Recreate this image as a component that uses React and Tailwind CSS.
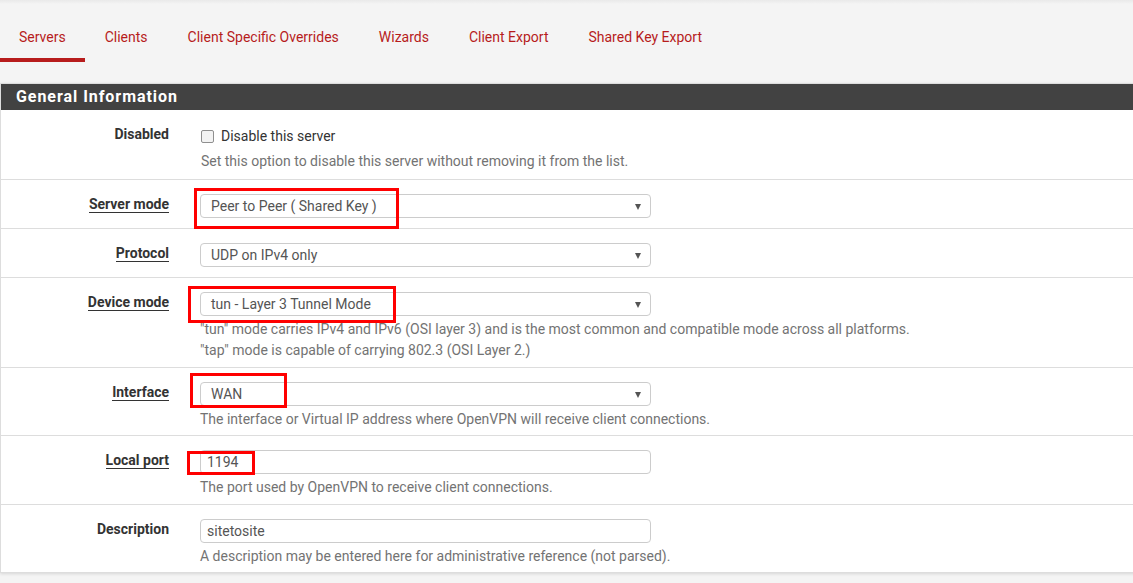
import React from "react";

const font = { fontFamily: "Roboto, 'Liberation Sans', sans-serif" };

function Select({ value }) {
  return (
    <div className="relative flex h-[24px] w-[451px] items-center rounded-[4px] border border-[#cccccc] bg-white pl-[10px] text-[14px] text-[#555555]">
      {value}
      <span className="absolute right-[9px] top-[9px] h-0 w-0 border-x-[3px] border-t-[6px] border-x-transparent border-t-[#555555]"></span>
    </div>
  );
}

function Input({ value }) {
  return (
    <div className="flex h-[24px] w-[451px] items-center rounded-[4px] border border-[#cccccc] bg-white pl-[6px] text-[14px] text-[#555555]">
      {value}
    </div>
  );
}

function Row({ label, underline, pb = "pb-[6px]", children }) {
  return (
    <div className="flex border-t border-[#dddddd]">
      <div className="w-[184px] pr-[16px] pt-[12px] text-right">
        <span
          className={
            "text-[14px] font-bold leading-[24px] text-[#333333] " +
            (underline ? "border-b border-[#333333]" : "")
          }
        >
          {label}
        </span>
      </div>
      <div className={"relative pl-[15px] pt-[14px] " + pb}>{children}</div>
    </div>
  );
}

function Help({ children }) {
  return <p className="mt-[3px] text-[14px] leading-[21px] text-[#737373]">{children}</p>;
}

export default function App() {
  return (
    <div className="min-h-[583px] bg-[#f4f4f4]" style={font}>
      {/* tabs */}
      <div className="flex h-[83px] bg-gradient-to-b from-[#e9e9e9] via-[#f4f4f4] to-[#f4f4f4] bg-[length:100%_8px] bg-no-repeat pt-[27px]">
        <div className="flex h-[35px] items-start border-b-[4px] border-[#b71c1c] px-[19px] text-[14px] leading-[20px] text-[#b71c1c]">
          Servers
        </div>
        <div className="px-[20px] text-[14px] leading-[20px] text-[#b71c1c]">Clients</div>
        <div className="px-[20px] text-[14px] leading-[20px] text-[#b71c1c]">Client Specific Overrides</div>
        <div className="px-[20px] text-[14px] leading-[20px] text-[#b71c1c]">Wizards</div>
        <div className="px-[20px] text-[14px] leading-[20px] text-[#b71c1c]">Client Export</div>
        <div className="px-[20px] text-[14px] leading-[20px] text-[#b71c1c]">Shared Key Export</div>
      </div>

      {/* panel */}
      <div className="w-[1140px] border border-[#dddddd] bg-white shadow-[0_1px_3px_rgba(0,0,0,0.12)]">
        <div className="flex h-[26px] items-center bg-[#424242] pl-[15px] text-[16px] font-bold tracking-[0.95px] text-white">
          General Information
        </div>

        <div className="flex">
          <div className="w-[184px] pr-[16px] pt-[12px] text-right text-[14px] font-bold leading-[24px] text-[#333333]">
            Disabled
          </div>
          <div className="pl-[16px] pt-[14px] pb-[7px]">
            <div className="flex h-[24px] items-center gap-[7px] text-[14px] text-[#333333]">
              <span className="h-[13px] w-[13px] rounded-[2px] border border-[#8f8f8f] bg-[#f3f3f3]"></span>
              Disable this server
            </div>
            <Help>Set this option to disable this server without removing it from the list.</Help>
          </div>
        </div>

        <Row label="Server mode" underline>
          <Select value="Peer to Peer ( Shared Key )" />
          <div className="absolute left-[9px] top-[8px] h-[41px] w-[205px] border-[3px] border-[#ff0000]"></div>
          <div className="h-[4px]"></div>
        </Row>

        <Row label="Protocol" underline>
          <Select value="UDP on IPv4 only" />
          <div className="h-[4px]"></div>
        </Row>

        <Row label="Device mode" underline>
          <Select value="tun - Layer 3 Tunnel Mode" />
          <Help>
            "tun" mode carries IPv4 and IPv6 (OSI layer 3) and is the most common and compatible mode across all platforms.
            <br />
            "tap" mode is capable of carrying 802.3 (OSI Layer 2.)
          </Help>
          <div className="absolute left-[3px] top-[8px] h-[37px] w-[208px] border-[3px] border-[#ff0000]"></div>
        </Row>

        <Row label="Interface" underline pb="pb-[5px]">
          <Select value="WAN" />
          <Help>The interface or Virtual IP address where OpenVPN will receive client connections.</Help>
          <div className="absolute left-[5px] top-[5px] h-[35px] w-[97px] border-[3px] border-[#ff0000]"></div>
        </Row>

        <Row label="Local port" underline>
          <Input value="1194" />
          <Help>The port used by OpenVPN to receive client connections.</Help>
          <div className="absolute left-[2px] top-[15px] h-[24px] w-[68px] border-[3px] border-[#ff0000]"></div>
        </Row>

        <Row label="Description" pb="pb-[5px]">
          <Input value="sitetosite" />
          <Help>A description may be entered here for administrative reference (not parsed).</Help>
        </Row>
      </div>
    </div>
  );
}
